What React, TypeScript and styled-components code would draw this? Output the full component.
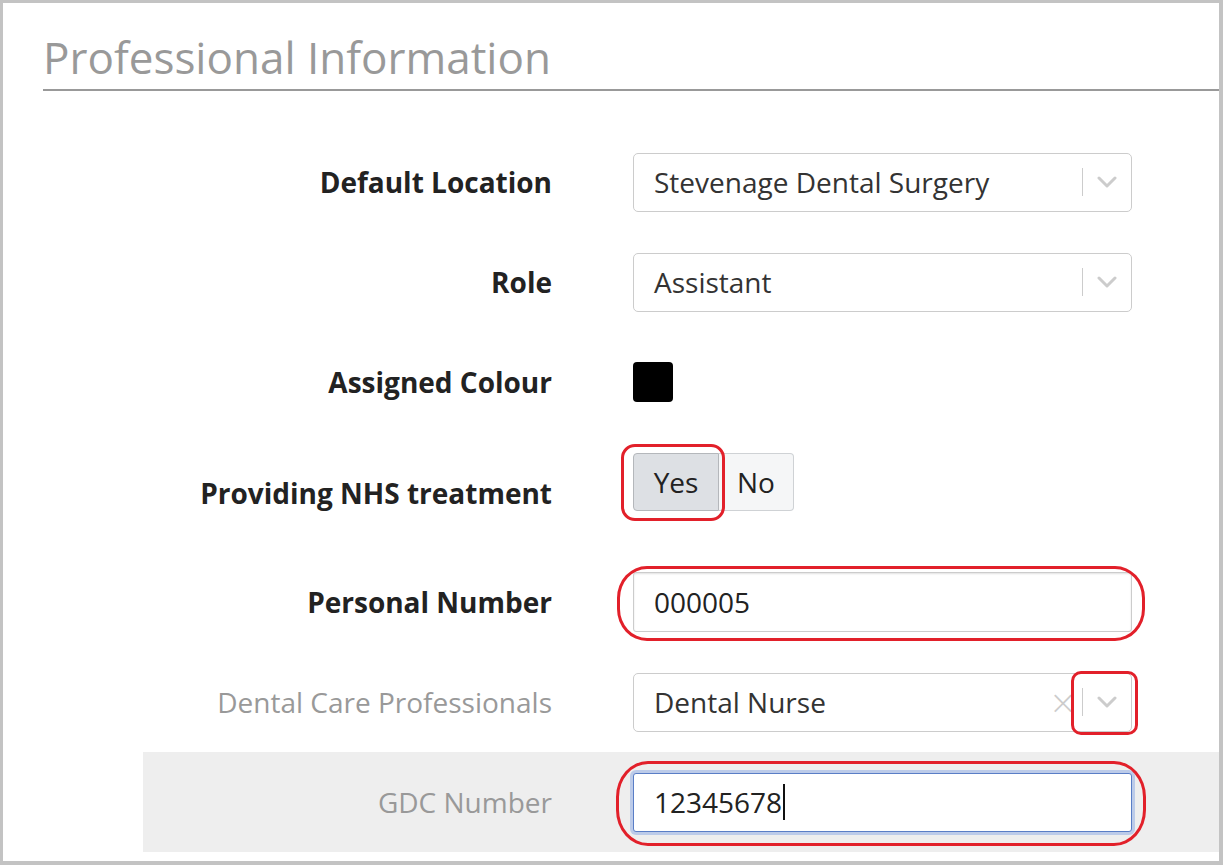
import React from 'react';
import styled, { createGlobalStyle } from 'styled-components';

const GlobalStyle = createGlobalStyle`
  html, body {
    margin: 0;
    padding: 0;
    background: #ffffff;
  }
  body {
    font-family: 'Open Sans', 'Liberation Sans', sans-serif;
  }
  * {
    box-sizing: border-box;
  }
`;

const Frame = styled.div`
  width: 1223px;
  height: 865px;
  border-style: solid;
  border-color: #c3c3c3;
  border-width: 3px 4px 4px 3px;
  background: #fff;
  padding-left: 40px;
  overflow: hidden;
`;

const Title = styled.h2`
  margin: 0;
  padding: 24px 0 0 0;
  height: 88px;
  font-size: 44px;
  font-weight: 400;
  line-height: 60px;
  color: #999;
  border-bottom: 2px solid #999;
`;

const Form = styled.div`
  margin-top: 41px;
  margin-left: 100px;
  display: flex;
  flex-direction: column;
`;

const Row = styled.div<{ $shaded?: boolean; $gapTop?: boolean }>`
  display: grid;
  grid-template-columns: 409px 499px;
  column-gap: 81px;
  align-items: center;
  height: 100px;
  padding: 20px 0;
  margin-top: ${(p) => (p.$gapTop ? '20px' : '0')};
  background: ${(p) => (p.$shaded ? '#eeeeee' : 'transparent')};
`;

const Label = styled.label<{ $muted?: boolean; $low?: boolean }>`
  text-align: right;
  font-size: 28px;
  font-weight: ${(p) => (p.$muted ? 400 : 700)};
  color: ${(p) => (p.$muted ? '#999' : '#222')};
  white-space: nowrap;
  padding-top: ${(p) => (p.$low ? '22px' : '0')};
`;

const Field = styled.div`
  position: relative;
  display: flex;
  align-items: center;
  height: 60px;
`;

const SelectBox = styled.div`
  position: relative;
  display: flex;
  align-items: center;
  width: 100%;
  height: 59px;
  border: 1px solid #cccccc;
  border-radius: 5px;
  background: #fff;
`;

const SelectValue = styled.div`
  flex: 1;
  padding-left: 20px;
  font-size: 28px;
  color: #333;
`;

const ClearMark = styled.span`
  width: 34px;
  margin-right: 2px;
  font-size: 34px;
  line-height: 1;
  color: #cccccc;
  text-align: center;
  font-family: 'DejaVu Sans', sans-serif;
  font-weight: 300;
`;

const Separator = styled.span`
  width: 1px;
  height: 28px;
  background: #cccccc;
`;

const Arrow = styled.span`
  display: flex;
  align-items: center;
  justify-content: center;
  width: 48px;
  height: 100%;
`;

const Swatch = styled.div<{ $color: string }>`
  width: 40px;
  height: 40px;
  border-radius: 4px;
  background: ${(p) => p.$color};
`;

const ButtonGroup = styled.div`
  position: relative;
  display: flex;
`;

const ToggleButton = styled.button<{ $active?: boolean; $side: 'left' | 'right' }>`
  height: 58px;
  padding: 0;
  font-family: inherit;
  font-size: 28px;
  color: #222;
  width: ${(p) => (p.$side === 'left' ? '86px' : '75px')};
  border: 1px solid ${(p) => (p.$active ? '#b4b7bb' : '#cfd2d5')};
  border-left-width: ${(p) => (p.$side === 'right' ? '0' : '1px')};
  border-radius: ${(p) => (p.$side === 'left' ? '4px 0 0 4px' : '0 4px 4px 0')};
  background: ${(p) => (p.$active ? '#dde0e4' : '#f5f6f7')};
`;

const TextInput = styled.div<{ $focused?: boolean }>`
  display: flex;
  align-items: center;
  width: 100%;
  height: ${(p) => (p.$focused ? '59px' : '60px')};
  padding-left: 20px;
  font-size: 28px;
  color: #222;
  background: #fff;
  border: 1px solid ${(p) => (p.$focused ? '#5a7ec6' : '#cccccc')};
  border-radius: 3px;
  box-shadow: ${(p) =>
    p.$focused
      ? '0 0 0 3px #bccbe9'
      : 'inset 0 1px 2px rgba(0, 0, 0, 0.12)'};
`;

const Caret = styled.span`
  display: inline-block;
  width: 2px;
  height: 36px;
  margin-left: 1px;
  background: #111;
`;

const Highlight = styled.span<{
  $top: number;
  $right?: number;
  $bottom: number;
  $left?: number;
  $width?: number;
  $radius: string;
}>`
  position: absolute;
  top: ${(p) => p.$top}px;
  bottom: ${(p) => p.$bottom}px;
  ${(p) => (p.$right !== undefined ? `right: ${p.$right}px;` : '')}
  ${(p) => (p.$left !== undefined ? `left: ${p.$left}px;` : '')}
  ${(p) => (p.$width !== undefined ? `width: ${p.$width}px;` : '')}
  border: 3.5px solid #e2202a;
  border-radius: ${(p) => p.$radius};
  pointer-events: none;
`;

function Chevron() {
  return (
    <svg width="20" height="12" viewBox="0 0 20 12">
      <path
        d="M2 2 L10 10 L18 2"
        fill="none"
        stroke="#cccccc"
        strokeWidth="3"
        strokeLinecap="round"
        strokeLinejoin="round"
      />
    </svg>
  );
}

function Select({
  value,
  clearable,
  marked,
}: {
  value: string;
  clearable?: boolean;
  marked?: boolean;
}) {
  return (
    <SelectBox>
      <SelectValue>{value}</SelectValue>
      {clearable && <ClearMark>×</ClearMark>}
      <Separator />
      <Arrow>
        <Chevron />
      </Arrow>
      {marked && (
        <Highlight $top={-3} $right={-7} $bottom={-4} $width={67} $radius="10px" />
      )}
    </SelectBox>
  );
}

export default function App() {
  return (
    <>
      <GlobalStyle />
      <Frame>
        <Title>Professional Information</Title>
        <Form>
          <Row>
            <Label>Default Location</Label>
            <Field>
              <Select value="Stevenage Dental Surgery" />
            </Field>
          </Row>
          <Row>
            <Label>Role</Label>
            <Field>
              <Select value="Assistant" />
            </Field>
          </Row>
          <Row>
            <Label>Assigned Colour</Label>
            <Field>
              <Swatch $color="#000" />
            </Field>
          </Row>
          <Row>
            <Label $low>Providing NHS treatment</Label>
            <Field>
              <ButtonGroup>
                <ToggleButton $side="left" $active>Yes</ToggleButton>
                <ToggleButton $side="right">No</ToggleButton>
                <Highlight $top={-9} $bottom={-10} $left={-12} $width={104} $radius="14px" />
              </ButtonGroup>
            </Field>
          </Row>
          <Row $gapTop>
            <Label>Personal Number</Label>
            <Field>
              <TextInput>000005</TextInput>
              <Highlight $top={-6} $right={-13} $bottom={-9} $left={-16} $radius="30px / 32px" />
            </Field>
          </Row>
          <Row>
            <Label $muted>Dental Care Professionals</Label>
            <Field>
              <Select value="Dental Nurse" clearable marked />
            </Field>
          </Row>
          <Row $shaded>
            <Label $muted>GDC Number</Label>
            <Field>
              <TextInput $focused>
                12345678
                <Caret />
              </TextInput>
              <Highlight $top={-11} $right={-14} $bottom={-14} $left={-17} $radius="32px / 36px" />
            </Field>
          </Row>
        </Form>
      </Frame>
    </>
  );
}
